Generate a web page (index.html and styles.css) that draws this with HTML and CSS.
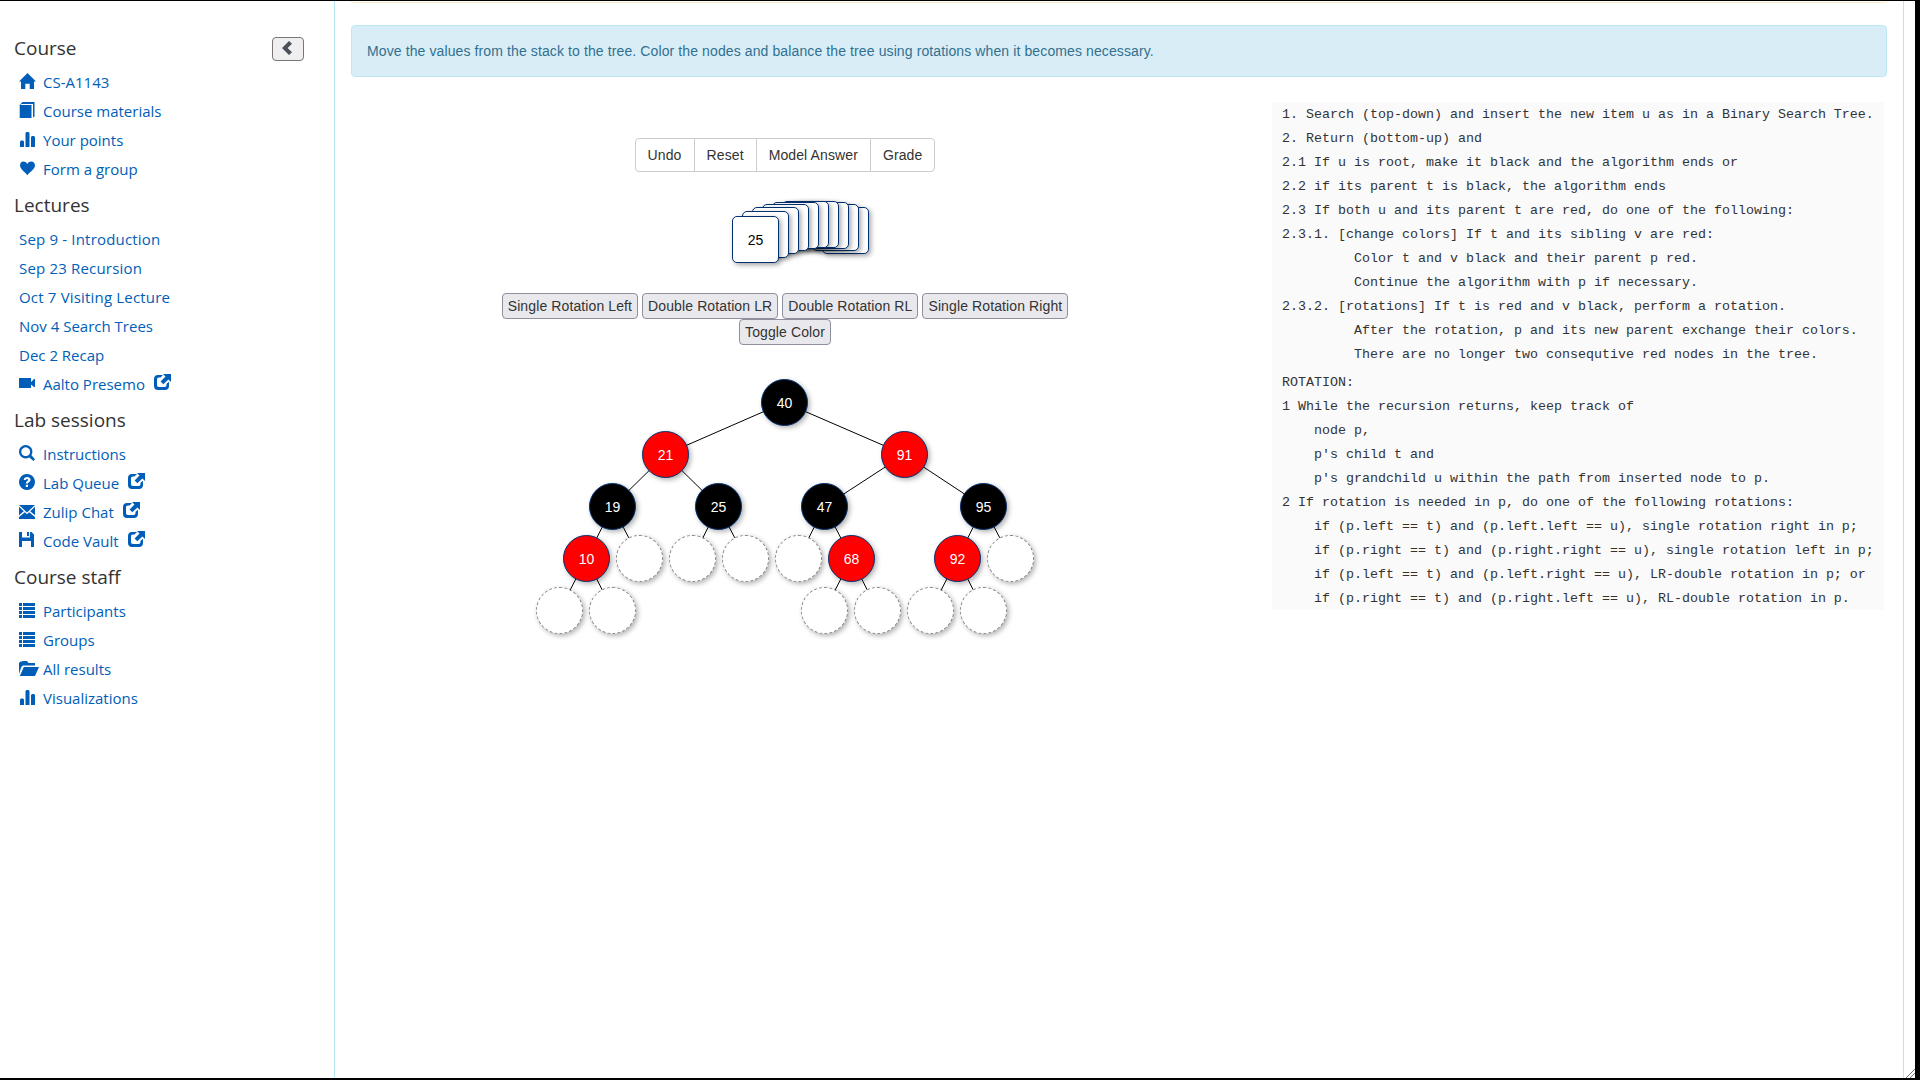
FILE: index.html
```html
<!DOCTYPE html>
<html lang="en">
<head>
<meta charset="utf-8">
<title>Red-black tree insertion</title>
<link rel="stylesheet" href="styles.css">
</head>
<body>
<svg class="defs" width="0" height="0">
  <symbol id="home" viewBox="0 0 17 16"><path d="M8.500 0 17 8.500H15V16H10.700V10.700H6.300V16H2V8.500H0Z"/></symbol>
  <symbol id="book" viewBox="0 0 16 16"><path d="M3.500 0H15.500V14.500L14 15.500V2H2.500L1.500 3H12.500V16H.7V3Z"/></symbol>
  <symbol id="stats" viewBox="0 0 16 16"><path d="M1 16V10.500L2 9.500H4L5 10.500V16ZM6.500 16V2L7.500 1H9.500L10.500 2V16ZM12 16V6L13 5H15L16 6V16Z"/></symbol>
  <symbol id="heart" viewBox="0 0 16 16"><path d="M8.300 15.200C6 12 1 9 1 5.500 1 1 6 .3 8.300 4 10.500.3 16 1 16 5.500 16 9 10.800 12 8.300 15.200Z"/></symbol>
  <symbol id="video" viewBox="0 0 16 16"><path d="M0 3H12V7L15 4H16V12H15L12 9.500V13H0Z"/></symbol>
  <symbol id="search" viewBox="0 0 16 16"><path fill-rule="evenodd" d="M6.700 0A6.700 6.700 0 1 1 6.690 0ZM6.700 2.300A4.400 4.400 0 1 0 6.710 2.300Z"/><path d="M9.500 11.800 11.800 9.500 16 14.200 14.400 16Z"/></symbol>
  <symbol id="question" viewBox="0 0 16 16"><path fill-rule="evenodd" d="M8 0A8 8 0 1 1 7.990 0ZM4.700 6H7C7 4.800 9 4.800 9 6 9 7 6.800 7.300 6.800 9.500H9C9 8.300 11.600 8 11.600 5.800 11.600 2 4.700 2 4.700 6ZM6.800 10.700V13H9V10.700Z"/></symbol>
  <symbol id="mail" viewBox="0 0 16 16"><path d="M0 2H16L8 9.500ZM0 3.800 4.800 8.300 0 12.300ZM16 3.800V12.300L11.200 8.300ZM0 16V14L5.900 9.300 8 11.300 10.100 9.300 16 14V16Z"/></symbol>
  <symbol id="save" viewBox="0 0 16 16"><path d="M0 0H3V5.500H11V0H12.500L15 2.500V15H12V9H3V15H0ZM8 0H10V4H8Z"/></symbol>
  <symbol id="list" viewBox="0 0 16 16"><path d="M0 1H3V4H0ZM4 1H16V4H4ZM0 5H3V8H0ZM4 5H16V8H4ZM0 9H3V12H0ZM4 9H16V12H4ZM0 13H3V16H0ZM4 13H16V16H4Z"/></symbol>
  <symbol id="folder" viewBox="0 0 20 16"><path d="M0 14V3L1.500 1.500H3L4 1H8L9.500 3H16V5.500H4L2.300 7ZM.8 16 4.800 7H20L16 16Z"/></symbol>
  <symbol id="external" viewBox="0 0 17 16"><path d="M4 1H9L6.500 3.500H5C3.700 3.500 3 4.200 3 5.500V11C3 12.300 3.700 13 5 13H10.500C11.800 13 12.500 12.300 12.500 11V9.700L15 7.700V12C15 14.500 13.500 16 11 16H4C1.500 16 0 14.500 0 12V5C0 2.500 1.500 1 4 1Z"/><path d="M9 0H17V8L14.400 5.500 9.300 10.300 6.600 7.600 11.500 2.600Z"/></symbol>
  <symbol id="chevron" viewBox="0 0 10 14"><path d="M7 0 10 2.700 5.600 7 10 11.300 7 14 0 7Z"/></symbol>
</svg>
<div class="window">
  <nav class="sidebar">
    <div class="head"><h4>Course</h4><button class="collapse"><svg><use href="#chevron"/></svg></button></div>
    <ul>
      <li><svg class="home"><use href="#home"/></svg><a>CS-A1143</a></li>
      <li><svg><use href="#book"/></svg><a>Course materials</a></li>
      <li><svg><use href="#stats"/></svg><a>Your points</a></li>
      <li><svg><use href="#heart"/></svg><a>Form a group</a></li>
    </ul>
    <div class="head"><h4>Lectures</h4></div>
    <ul>
      <li class="plain"><a>Sep 9 - Introduction</a></li>
      <li class="plain"><a>Sep 23 Recursion</a></li>
      <li class="plain"><a>Oct 7 Visiting Lecture</a></li>
      <li><a>Nov 4 Search Trees</a></li>
      <li><a>Dec 2 Recap</a></li>
      <li><svg><use href="#video"/></svg><a>Aalto Presemo</a><svg class="ext"><use href="#external"/></svg></li>
    </ul>
    <div class="head"><h4>Lab sessions</h4></div>
    <ul>
      <li><svg><use href="#search"/></svg><a>Instructions</a></li>
      <li><svg><use href="#question"/></svg><a>Lab Queue</a><svg class="ext"><use href="#external"/></svg></li>
      <li><svg><use href="#mail"/></svg><a>Zulip Chat</a><svg class="ext"><use href="#external"/></svg></li>
      <li><svg><use href="#save"/></svg><a>Code Vault</a><svg class="ext"><use href="#external"/></svg></li>
    </ul>
    <div class="head"><h4>Course staff</h4></div>
    <ul>
      <li><svg><use href="#list"/></svg><a>Participants</a></li>
      <li><svg><use href="#list"/></svg><a>Groups</a></li>
      <li><svg class="folder"><use href="#folder"/></svg><a>All results</a></li>
      <li><svg><use href="#stats"/></svg><a>Visualizations</a></li>
    </ul>
  </nav>
  <main class="content">
    <div class="previous"></div>
    <div class="alert">Move the values from the stack to the tree. Color the nodes and balance the tree using rotations when it becomes necessary.</div>
    <div class="exercise">
      <section class="board">
        <div class="toolbar"><button>Undo</button><button>Reset</button><button>Model Answer</button><button>Grade</button></div>
        <div class="stack" id="stack"></div>
        <div class="actions"><button>Single Rotation Left</button><button>Double Rotation LR</button><button>Double Rotation RL</button><button>Single Rotation Right</button></div>
        <div class="actions"><button>Toggle Color</button></div>
        <div class="tree" id="tree"></div>
      </section>
      <section class="pseudo">
<pre>1. Search (top-down) and insert the new item u as in a Binary Search Tree.
2. Return (bottom-up) and
2.1 If u is root, make it black and the algorithm ends or
2.2 if its parent t is black, the algorithm ends
2.3 If both u and its parent t are red, do one of the following:
2.3.1. [change colors] If t and its sibling v are red:
         Color t and v black and their parent p red.
         Continue the algorithm with p if necessary.
2.3.2. [rotations] If t is red and v black, perform a rotation.
         After the rotation, p and its new parent exchange their colors.
         There are no longer two consequtive red nodes in the tree.</pre>
<pre>ROTATION:
1 While the recursion returns, keep track of
    node p,
    p's child t and
    p's grandchild u within the path from inserted node to p.
2 If rotation is needed in p, do one of the following rotations:
    if (p.left == t) and (p.left.left == u), single rotation right in p;
    if (p.right == t) and (p.right.right == u), single rotation left in p;
    if (p.left == t) and (p.left.right == u), LR-double rotation in p; or
    if (p.right == t) and (p.right.left == u), RL-double rotation in p.</pre>
      </section>
    </div>
  </main>
  <div class="gutter"><svg class="grip" viewBox="0 0 9 9"><path d="M0 9 9 0M4 9 9 4"/></svg></div>
</div>
<script src="tree.js"></script>
</body>
</html>
```
FILE: styles.css
```css
* { box-sizing: border-box; }
body { margin: 0; background: #000; color: #333; font: 14px/20px "Liberation Sans", Arial, sans-serif; overflow: hidden; }
button { font: inherit; color: inherit; margin: 0; letter-spacing: inherit; }
.defs { position: absolute; }
.window { display: flex; width: 1915px; height: 1077px; margin-top: 1px; background: #fff; }

.sidebar { width: 334px; padding: 31px 0 0 14px; font-family: "Open Sans", "Noto Sans", sans-serif; }
.head { display: flex; justify-content: space-between; height: 36px; padding-right: 30px; }
h4 { margin: 0; font-size: 19px; line-height: 32px; font-weight: 400; color: #333; }
.collapse { width: 32px; height: 24px; margin-top: 5px; padding: 0; border: 1px solid #767676; border-radius: 4px; background: #efefef; display: flex; align-items: center; justify-content: center; }
.collapse svg { width: 10px; height: 14px; fill: #495057; margin: -3px 2px 0 0; }
ul { list-style: none; margin: 0 0 5px; padding: 0; }
li { display: flex; height: 29px; padding-left: 5px; font-size: 15px; line-height: 29px; color: #005eb8; }
li.plain { letter-spacing: .18px; }
li svg { width: 16px; height: 16px; margin: 5px 8px 0 0; fill: #005eb8; flex: none; }
li svg.home { width: 17px; margin-right: 7px; }
li svg.folder { width: 20px; margin-right: 4px; }
li svg.ext { width: 17px; margin: 4px 0 0 9px; }

.content { width: 1570px; border: solid #b5e8f0; border-width: 0 1px; padding: 0 16px; letter-spacing: .11px; }
.previous { height: 2px; border: 1px solid #faebcc; border-top: 0; border-radius: 0 0 4px 4px; }
.alert { height: 52px; margin-top: 22px; padding: 15px; border: 1px solid #bce8f1; border-radius: 4px; background: #d9edf7; color: #31708f; }
.exercise { display: flex; justify-content: space-between; padding: 25px 3px 0 0; }
.board { width: 867px; padding-top: 36px; }
.toolbar { display: flex; justify-content: center; padding-left: 1px; }
.toolbar button { padding: 6px 12px; height: 34px; border: 1px solid #ccc; background: #fff; }
.toolbar button + button { margin-left: -1px; }
.toolbar button:first-child { border-radius: 4px 0 0 4px; }
.toolbar button:last-child { border-radius: 0 4px 4px 0; }
.stack { position: relative; width: 137px; height: 62px; margin: 29px 0 30px 381px; }
.card, .node { position: absolute; width: 47px; height: 47px; text-align: center; line-height: 46px; border: 1px solid #003070; background: #fff; color: #000; letter-spacing: 0; box-shadow: 2px 2px 5px rgba(0,0,0,.35); }
.card { border-radius: 5px; }
.actions { display: flex; justify-content: center; gap: 4px; padding-left: 1px; }
.actions button { height: 26px; padding: 0 5px; border: 1px solid #8f8f9d; border-radius: 4px; background: #e9e9ed; white-space: nowrap; }
.tree { position: relative; width: 500px; height: 255px; margin: 34px 0 0 185px; }
.tree svg { position: absolute; left: 0; top: 0; stroke: #000; }
.node { border-radius: 50%; line-height: 47px; color: #fff; box-shadow: 2px 2px 5px rgba(0,0,0,.3); }
.node.black { background: #000; }
.node.red { background: #f00; }
.node.empty { border: 1px dashed #888; }

.pseudo { width: 612px; height: 508px; background: #fafafa; padding: 1px 0 0 10px; letter-spacing: 0; }
pre { margin: 0 0 4px; font: 13.333px/24px "Liberation Mono", "Courier New", monospace; }
.gutter { flex: 1; display: flex; align-items: flex-end; justify-content: flex-end; }
.grip { width: 9px; height: 9px; stroke: #777; fill: none; }
```
FILE: tree.js
```js
const stack = document.getElementById("stack");
const arc = [15, 10, 6, 3, 1, 0, 0, 1, 3, 6];
for (let i = arc.length - 1; i >= 0; i--) {
  const card = document.createElement("div");
  card.className = "card";
  card.style.left = i * 10 + "px";
  card.style.top = arc[i] + "px";
  card.textContent = i === 0 ? "25" : "";
  stack.append(card);
}

// [value, colour, left, row, parent index]
const nodes = [
  ["40", "black", 225, 0, -1],
  ["21", "red", 106, 1, 0], ["91", "red", 345, 1, 0],
  ["19", "black", 53, 2, 1], ["25", "black", 159, 2, 1], ["47", "black", 265, 2, 2], ["95", "black", 424, 2, 2],
  ["10", "red", 27, 3, 3], ["", "empty", 80, 3, 3], ["", "empty", 133, 3, 4], ["", "empty", 186, 3, 4],
  ["", "empty", 239, 3, 5], ["68", "red", 292, 3, 5], ["92", "red", 398, 3, 6], ["", "empty", 451, 3, 6],
  ["", "empty", 0, 4, 7], ["", "empty", 53, 4, 7], ["", "empty", 265, 4, 12], ["", "empty", 318, 4, 12],
  ["", "empty", 371, 4, 13], ["", "empty", 424, 4, 13]
];
const tree = document.getElementById("tree");
let lines = "";
for (const [, , x, row, parent] of nodes) {
  if (parent < 0) continue;
  const p = nodes[parent];
  lines += `<line x1="${p[2] + 23.5}" y1="${p[3] * 52 + 23.5}" x2="${x + 23.5}" y2="${row * 52 + 23.5}"/>`;
}
let circles = "";
for (const [value, colour, x, row] of nodes) {
  circles += `<div class="node ${colour}" style="left:${x}px;top:${row * 52}px">${value}</div>`;
}
tree.innerHTML = circles;
tree.insertAdjacentHTML("afterbegin", `<svg width="500" height="255">${lines}</svg>`);
```
